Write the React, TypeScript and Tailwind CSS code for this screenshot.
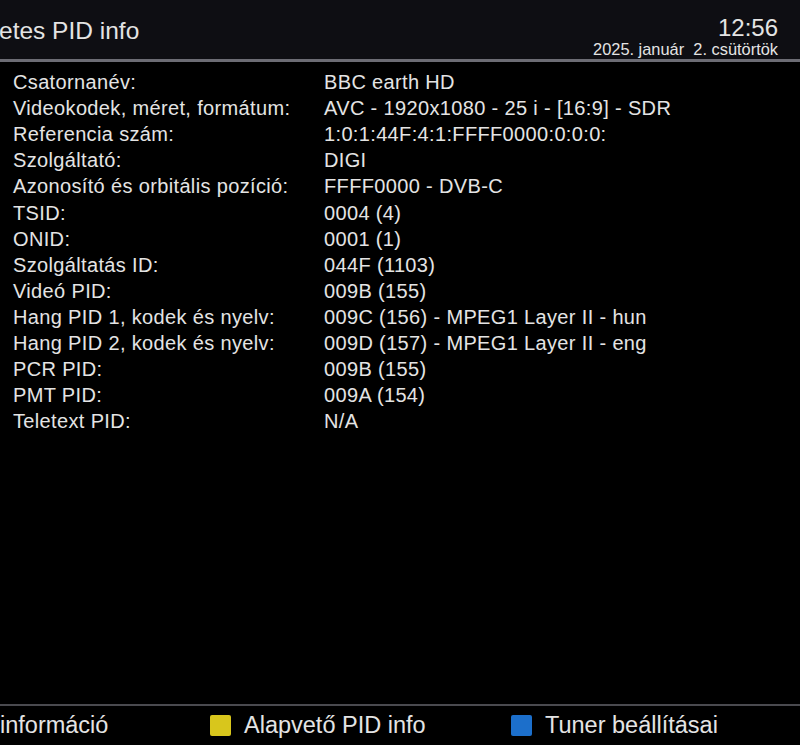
import React from "react";

const rows: [string, string][] = [
  ["Csatornanév:", "BBC earth HD"],
  ["Videokodek, méret, formátum:", "AVC - 1920x1080 - 25 i - [16:9] - SDR"],
  ["Referencia szám:", "1:0:1:44F:4:1:FFFF0000:0:0:0:"],
  ["Szolgáltató:", "DIGI"],
  ["Azonosító és orbitális pozíció:", "FFFF0000 - DVB-C"],
  ["TSID:", "0004 (4)"],
  ["ONID:", "0001 (1)"],
  ["Szolgáltatás ID:", "044F (1103)"],
  ["Videó PID:", "009B (155)"],
  ["Hang PID 1, kodek és nyelv:", "009C (156) - MPEG1 Layer II - hun"],
  ["Hang PID 2, kodek és nyelv:", "009D (157) - MPEG1 Layer II - eng"],
  ["PCR PID:", "009B (155)"],
  ["PMT PID:", "009A (154)"],
  ["Teletext PID:", "N/A"],
];

export default function App() {
  return (
    <div
      className="w-[800px] h-[745px] bg-black text-[#e4e4e4] flex flex-col overflow-hidden"
      style={{ fontFamily: "'Liberation Sans', Arial, sans-serif" }}
    >
      <div className="h-[59px] bg-[#0e0e13] flex justify-between items-start shrink-0">
        <div className="text-[24.5px] leading-none mt-[19px] -ml-[1px]">etes PID info</div>
        <div className="flex flex-col items-end mr-[22px] mt-[16px]">
          <div className="text-[24px] leading-none">12:56</div>
          <div className="text-[16.4px] leading-none mt-[1px]">2025. január&nbsp; 2. csütörtök</div>
        </div>
      </div>
      <div className="h-[3px] bg-[#6c6c74] shrink-0" />
      <div className="flex-1 flex flex-col pt-[7px] pl-[13px]">
        {rows.map(([l, v]) => (
          <div key={l} className="flex h-[26.1px] items-center text-[20px] tracking-[0.35px] leading-none">
            <div className="w-[311px]">{l}</div>
            <div>{v}</div>
          </div>
        ))}
      </div>
      <div className="h-[2px] bg-[#4a4a4f] shrink-0" />
      <div className="h-[39px] flex items-center text-[23.5px] leading-none shrink-0">
        <div className="w-[210px]">információ</div>
        <div className="w-[21px] h-[21px] bg-[#d8c61c] rounded-[2px]" />
        <div className="ml-[13px] w-[267px]">Alapvető PID info</div>
        <div className="w-[21px] h-[21px] bg-[#1c6fcb] rounded-[2px]" />
        <div className="ml-[13px]">Tuner beállításai</div>
      </div>
    </div>
  );
}
